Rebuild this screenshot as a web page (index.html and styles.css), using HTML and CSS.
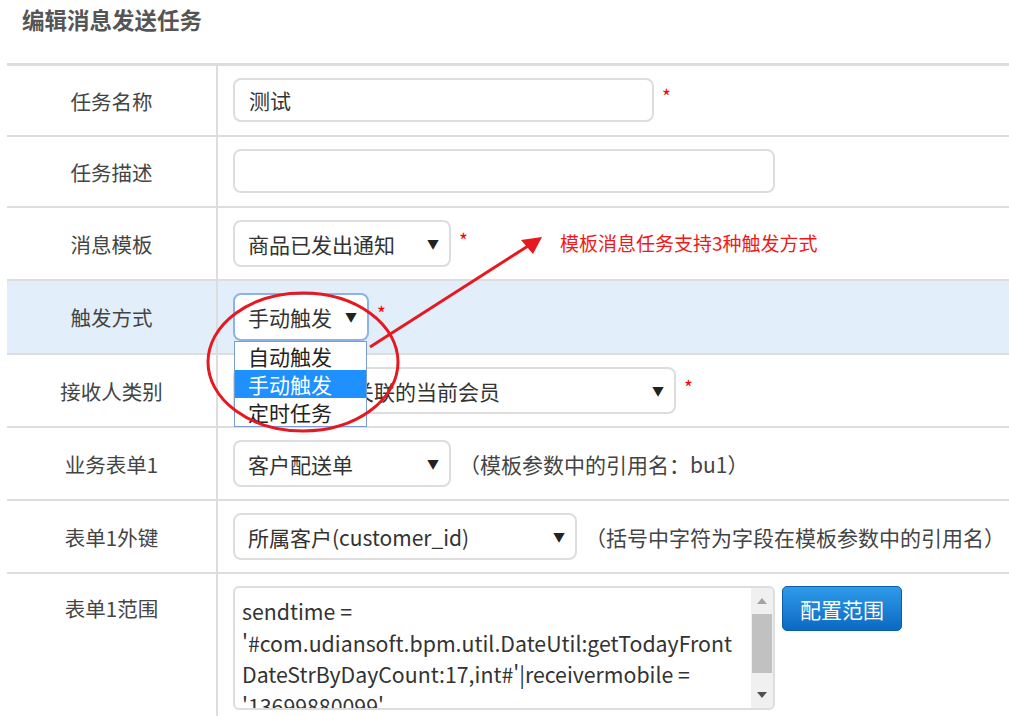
FILE: index.html
```html
<!DOCTYPE html>
<html lang="zh-CN">
<head>
<meta charset="utf-8">
<title>编辑消息发送任务</title>
<link rel="stylesheet" href="styles.css">
</head>
<body>
<div class="page">
  <h1 class="title">编辑消息发送任务</h1>
  <table class="form">
    <tr>
      <td class="label">任务名称</td>
      <td class="value"><div class="cell"><div class="input w1">测试</div><span class="star">*</span></div></td>
    </tr>
    <tr>
      <td class="label">任务描述</td>
      <td class="value"><div class="cell"><div class="input w2"></div></div></td>
    </tr>
    <tr class="srow">
      <td class="label">消息模板</td>
      <td class="value"><div class="cell"><div class="select s1"><span>商品已发出通知</span><i class="arr">▼</i></div><span class="star">*</span></div></td>
    </tr>
    <tr class="srow active">
      <td class="label">触发方式</td>
      <td class="value"><div class="cell"><div class="dropwrap"><div class="select s2 focus"><span>手动触发</span><i class="arr">▼</i></div>
        <ul class="options"><li>自动触发</li><li class="sel">手动触发</li><li>定时任务</li></ul></div><span class="star">*</span></div></td>
    </tr>
    <tr class="srow">
      <td class="label">接收人类别</td>
      <td class="value"><div class="cell"><div class="select s3"><span>与业务表单关联的当前会员</span><i class="arr">▼</i></div><span class="star">*</span></div></td>
    </tr>
    <tr class="srow">
      <td class="label">业务表单1</td>
      <td class="value"><div class="cell"><div class="select s1"><span>客户配送单</span><i class="arr">▼</i></div><span class="hint">（模板参数中的引用名：bu1）</span></div></td>
    </tr>
    <tr class="srow">
      <td class="label">表单1外键</td>
      <td class="value"><div class="cell"><div class="select s4"><span>所属客户(customer_id)</span><i class="arr">▼</i></div><span class="hint h2">（括号中字符为字段在模板参数中的引用名）</span></div></td>
    </tr>
    <tr class="last">
      <td class="label top">表单1范围</td>
      <td class="value"><div class="cell topcell">
        <div class="textarea">
          <div class="tatext">
            <div>sendtime =</div>
            <div>'#com.udiansoft.bpm.util.DateUtil:getTodayFront</div>
            <div>DateStrByDayCount:17,int#'|receivermobile =</div>
            <div>'13699880099'</div>
          </div>
          <div class="scroll"><span class="up"></span><span class="thumb"></span><span class="down"></span></div>
        </div>
        <button class="btn">配置范围</button>
      </div></td>
    </tr>
  </table>
  <div class="note">模板消息任务支持3种触发方式</div>
  <svg class="marks" width="1009" height="716" viewBox="0 0 1009 716">
    <ellipse cx="303" cy="362" rx="95" ry="69" fill="none" stroke="#e5191f" stroke-width="3"/>
    <line x1="370" y1="347" x2="528" y2="246" stroke="#e5191f" stroke-width="3"/>
    <polygon points="542,237 533,254 521,240" fill="#e5191f"/>
  </svg>
</div>
</body>
</html>
```
FILE: styles.css
```css
* { box-sizing: border-box; }
html, body { margin: 0; padding: 0; background: #fff; }
body {
  font-family: "Noto Sans CJK SC", "Noto Sans", sans-serif;
  color: #333;
  width: 1009px;
  height: 716px;
  overflow: hidden;
}
.page { position: relative; width: 1009px; height: 716px; padding-left: 7px; }
.title {
  margin: 0;
  padding: 4px 0 0 15px;
  height: 63px;
  font-size: 22.5px;
  line-height: 31px;
  font-weight: bold;
  color: #555;
}
.form {
  border-collapse: collapse;
  width: 1010px;
  border-top: 3px solid #ddd;
}
.form td { padding: 0; border-bottom: 2px solid #ddd; }
.form tr.last td { border-bottom: none; }
.label {
  width: 210px;
  text-align: center;
  font-size: 20.5px;
  line-height: 24px;
  color: #444;
  border-right: 2px solid #ddd;
  vertical-align: middle;
}
.label.top { vertical-align: top; padding-top: 22px !important; }
.value { padding: 12px 0 13px 15px !important; line-height: 24px; }
.srow .value { padding-bottom: 12px !important; }
.active td { background: #e3eefb; }
.cell { display: flex; align-items: center; }
.topcell { align-items: flex-start; padding-bottom: 6px; }
.input {
  height: 44px;
  border: 2px solid #ddd;
  border-radius: 8px;
  background: #fff;
  font-size: 21px;
  line-height: 40px;
  padding-left: 14px;
  color: #333;
}
.w1 { width: 421px; }
.w2 { width: 542px; }
.select {
  height: 47px;
  border: 2px solid #ddd;
  border-radius: 8px;
  background: #fff;
  font-size: 21px;
  padding: 0 10px 0 13px;
  display: flex;
  align-items: center;
  justify-content: space-between;
  color: #333;
  white-space: nowrap;
}
.arr { font-style: normal; font-size: 12px; color: #222; }
.s1 { width: 218px; }
.s2 { width: 136px; height: 48px; }
.s3 { width: 443px; }
.s4 { width: 344px; }
.focus { border: 2px solid #8db2ea; }
.star { color: #f00; font-size: 19px; margin-left: 8px; margin-top: -8px; }
.hint { font-size: 21px; color: #444; margin-left: 8px; }
.dropwrap { position: relative; }
.options {
  position: absolute;
  left: 1px;
  top: 48px;
  width: 133px;
  margin: 0;
  padding: 0;
  list-style: none;
  background: #fff;
  border: 1px solid #7a9cd3;
  z-index: 5;
}
.options li {
  font-size: 21px;
  line-height: 28px;
  height: 28px;
  padding-left: 13px;
  color: #222;
  white-space: nowrap;
}
.options li.sel { background: #1e90ff; color: #fff; }
.textarea {
  position: relative;
  width: 542px;
  height: 124px;
  border: 2px solid #ddd;
  border-radius: 6px;
  overflow: hidden;
  display: flex;
  background: #fff;
}
.tatext {
  flex: 1;
  padding: 7px 0 0 7px;
  font-size: 21.3px;
  line-height: 31.5px;
  color: #333;
  white-space: nowrap;
  overflow: hidden;
}
.scroll {
  width: 22px;
  background: #f0f0f0;
  display: flex;
  flex-direction: column;
  align-items: center;
}
.up, .down { width: 0; height: 0; border-left: 5px solid transparent; border-right: 5px solid transparent; }
.up { border-bottom: 6px solid #a3a3a3; margin-top: 10px; }
.thumb { width: 20px; height: 59px; background: #c1c1c1; margin-top: 10px; }
.down { border-top: 6px solid #505050; margin-top: auto; margin-bottom: 10px; }
.btn {
  margin-left: 7px;
  width: 120px;
  height: 45px;
  border: 1px solid #0a5ea8;
  border-radius: 5px;
  background: linear-gradient(#2f9be9, #0b69c2);
  color: #fff;
  font-family: "Noto Sans CJK SC", sans-serif;
  font-size: 21px;
  padding: 0;
}
.note {
  position: absolute;
  left: 560px;
  top: 229px;
  font-size: 19px;
  line-height: 28px;
  color: #f01818;
}
.marks { position: absolute; left: 0; top: 0; pointer-events: none; z-index: 10; }
```
